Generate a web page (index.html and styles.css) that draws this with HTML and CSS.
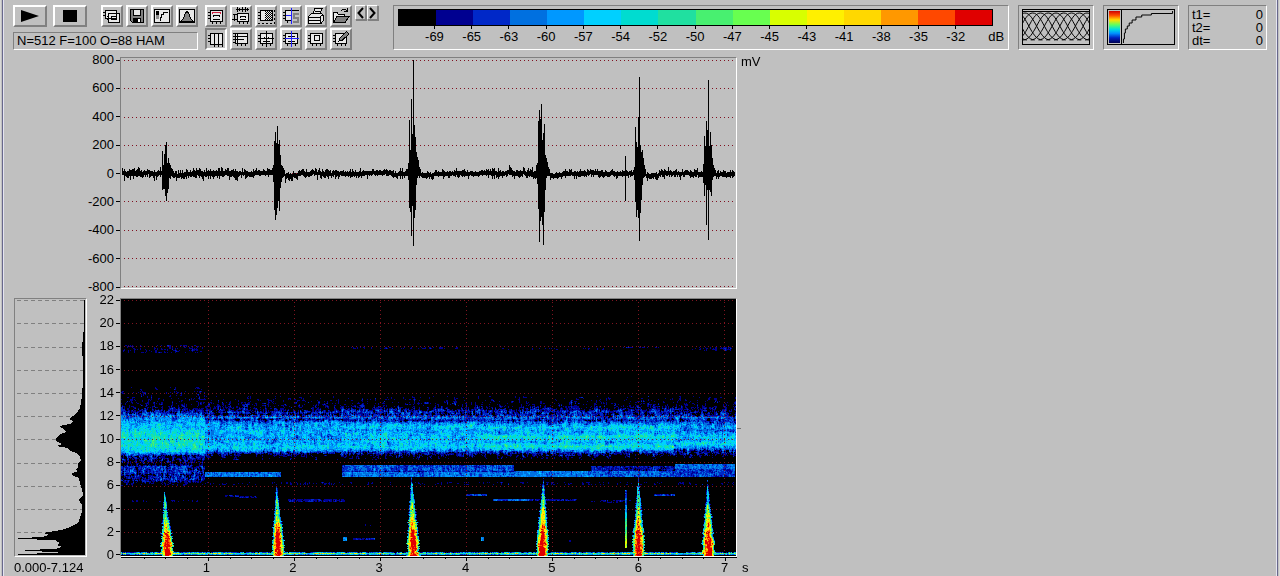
FILE: index.html
```
<!DOCTYPE html>
<html lang="en">
<head>
<meta charset="utf-8">
<title>Spectrogram analyser</title>
<link rel="stylesheet" href="styles.css">
</head>
<body>
<div class="window">
<header class="toolbar">
  <div class="group transport">
    <div class="row">
      <button class="btn wide" aria-label="Play"><svg width="20" height="14" viewBox="0 0 20 14"><path d="M1 1L19 7L1 13Z"/></svg></button>
      <button class="btn wide" aria-label="Stop"><svg width="14" height="12" viewBox="0 0 14 12"><path d="M0 0H14V12H0Z"/></svg></button>
      <div class="row icons">
        <button class="btn" aria-label="Copy"><svg class="ico" viewBox="0 0 18 18"><path class="f" d="M2.500 3.500H13.500V11.500H2.500ZM5.500 6.500H16.500V15.500H5.500Z"/><path d="M0 5.500H3M0 8.500H3M4 12.500H6M4 9.500H6M8 12.500H14M8.500 11V9.500H13.500V11"/></svg></button>
        <button class="btn" aria-label="Save"><svg class="ico" viewBox="0 0 18 18"><path class="g" d="M2.500 2.500H15.500V15.500H4.500L2.500 13.500Z"/><path class="f" d="M5.500 2.500H12.500V8.500H5.500Z"/><path class="k" d="M5 11H13V16H5Z"/><path class="w" d="M10 12H12V15H10Z"/></svg></button>
        <button class="btn" aria-label="Transfer curve"><svg class="ico" viewBox="0 0 18 18"><path class="f" d="M1.500 2.500H16.500V15.500H1.500Z"/><path class="k" d="M3 4H6V8H3Z"/><path class="s" d="M3 8H6V12H3Z"/><path d="M7.500 14V10.500H8.500V7.500H10.500V5.500H15"/></svg></button>
        <button class="btn" aria-label="Spectrum"><svg class="ico" viewBox="0 0 18 18"><path class="f" d="M1.500 2.500H16.500V15.500H1.500Z"/><path class="g" d="M3 14.500Q6 12 7 7L9 4L11 7Q12 12 15 14.500Z"/></svg></button>
      </div>
    </div>
    <output class="status">N=512 F=100 O=88 HAM</output>
  </div>
  <div class="group tools">
    <div class="row">
      <button class="btn" aria-label="Spectrogram"><svg class="ico" viewBox="0 0 18 18"><path class="f" d="M3.500 3.500H15.500V14.500H3.500Z"/><path d="M1 5.500H3M1 8.500H3M1 11.500H3M5.500 15V17M9.500 15V17M13.500 15V17M6.500 10V8.500H12.500V10M6 12.500H13"/><path class="r" d="M5.500 7V5.500H13.500V7"/></svg></button>
      <button class="btn" aria-label="Waveform and spectrogram"><svg class="ico" viewBox="0 0 18 18"><path class="f" d="M5.500 6.500H16.500V14.500H5.500Z"/><path d="M4 2.500H17M5.500 0V5M7.500 1V4M10.500 0V5M13.500 0V5M15.500 1V4M1 7.500H5M2.500 7V14M0 12.500H5M7.500 15V17M11.500 15V17M15.500 15V17M8.500 11V9.500H13.500V11M8 12.500H14"/></svg></button>
      <button class="btn" aria-label="Select region"><svg class="ico" viewBox="0 0 18 18"><path class="f" d="M3.500 3.500H15.500V13.500H3.500Z"/><path class="dots" d="M8 4.500H15M9 5.500H15M8 6.500H15M9 7.500H15M8 8.500H15M9 9.500H15M8 10.500H15M9 11.500H15M8 12.500H15"/><path d="M1 5.500H3M1 8.500H3M1 11.500H3"/><path class="far" d="M1 16.500H17V2"/></svg></button>
      <button class="btn" aria-label="Scale"><svg class="ico" viewBox="0 0 18 18"><path class="f" d="M10 3.500H3.500V13.500H10"/><path d="M1 5.500H3M1 8.500H8M1 11.500H3M10 3.500H17M5.500 13V16"/><path class="b" d="M9.500 1V17M4 8.500H9"/><path class="sg" d="M17 7H12V10.500H16V15H11"/></svg></button>
      <button class="btn" aria-label="Print"><svg class="ico" viewBox="0 0 18 18"><path class="f" d="M6 7L8 1.500H15L12.500 7M1.500 9.500L4.500 6.500H14.500L16.500 9V13.500L14 16.500H1.500Z"/><path d="M8 4H13M7 6H12M2 10H13L16 7M13.500 10V16M2 13H13"/></svg></button>
      <button class="btn" aria-label="Open"><svg class="ico" viewBox="0 0 18 18"><path class="f" d="M1.500 15V5.500H5L6.500 7.500H12.500V9.500"/><path class="g" d="M1.500 15.500L5 9.500H17L13 15.500Z"/><path d="M9 3.500Q12 1 15 4M15 1V4.500H12"/></svg></button>
      <button class="btn mini" aria-label="Previous"><svg width="7" height="12" viewBox="0 0 7 12"><path class="v" d="M6 1L1.500 6L6 11"/></svg></button>
      <button class="btn mini next" aria-label="Next"><svg width="7" height="12" viewBox="0 0 7 12"><path class="v" d="M1 1L5.500 6L1 11"/></svg></button>
    </div>
    <div class="row">
      <button class="btn down" aria-pressed="true" aria-label="Vertical cursors"><svg class="ico" viewBox="0 0 18 18"><path class="f" d="M3.500 3.500H15.500V14.500H3.500Z"/><path d="M1 5.500H3M1 8.500H3M1 11.500H3M7.500 3V17M11.500 3V17M15.500 14V17"/></svg></button>
      <button class="btn" aria-label="Horizontal cursors"><svg class="ico" viewBox="0 0 18 18"><path class="f" d="M3.500 3.500H15.500V13.500H3.500Z"/><path d="M1 3.500H4M1 6.500H15M1 9.500H12M1 12.500H4M5.500 3V16M9.500 13V16M13.500 13V16"/></svg></button>
      <button class="btn" aria-label="Cross cursor"><svg class="ico" viewBox="0 0 18 18"><path class="f" d="M3.500 3.500H15.500V13.500H3.500Z"/><path d="M1 5.500H3M1 8.500H17M1 11.500H3M9.500 1V17M5.500 13V16M13.500 13V16M7.500 7V8M11.500 7V8M6 11.500H13"/></svg></button>
      <button class="btn" aria-label="Tracking cursor"><svg class="ico" viewBox="0 0 18 18"><path class="f" d="M3.500 3.500H15.500V13.500H3.500Z"/><path d="M1 5.500H3M1 8.500H3M1 11.500H3M5.500 13V16M13.500 13V16M6 6.500H13M6 11.500H13"/><path class="b" d="M9.500 1V17M3 8.500H17"/></svg></button>
      <button class="btn" aria-label="Box cursor"><svg class="ico" viewBox="0 0 18 18"><path class="f" d="M3.500 3.500H15.500V13.500H3.500ZM7.500 5.500H12.500V10.500H7.500Z"/><path d="M1 5.500H3M1 8.500H3M1 11.500H3M5.500 13V16M9.500 13V16M13.500 13V16"/></svg></button>
      <button class="btn" aria-label="Annotate"><svg class="ico" viewBox="0 0 18 18"><path class="f" d="M3.500 3.500H14.500V13.500H3.500Z"/><path d="M1 5.500H3M1 8.500H3M1 11.500H3M5.500 13V16M9.500 13V16M13.500 13V16"/><path class="g" d="M7 11L8 8L14.500 1.500L17 4L10 10.500Z"/></svg></button>
    </div>
  </div>
  <section class="panel scale" aria-label="Level scale">
    <div class="bar" id="bar"></div>
    <div class="marks" id="marks"></div>
  </section>
  <section class="panel preview" aria-label="Window overlap">
    <svg class="pic" id="overlap" viewBox="0 0 68 34" preserveAspectRatio="none"></svg>
  </section>
  <section class="panel preview" aria-label="Colour transfer">
    <div class="transfer">
      <div class="rainbow"></div>
      <svg class="curve" viewBox="0 0 54 34" preserveAspectRatio="none"><path d="M1.500 33V29H2.500V23H3.500V19H5.500V16H7.500V13H10.500V10H14.500V7H20.500V5H30.500V3.500H52.500V1"/></svg>
    </div>
  </section>
  <dl class="panel times">
    <div><dt>t1=</dt><dd>0</dd></div>
    <div><dt>t2=</dt><dd>0</dd></div>
    <div><dt>dt=</dt><dd>0</dd></div>
  </dl>
</header>

<main class="plots">
  <div class="axis amp"><span>800</span><span>600</span><span>400</span><span>200</span><span>0</span><span>-200</span><span>-400</span><span>-600</span><span>-800</span></div>
  <div class="panel plot wave"><canvas id="wave" width="615" height="230"></canvas></div>
  <div class="unit">mV</div>

  <div class="panel plot power">
    <svg viewBox="0 0 71 257" preserveAspectRatio="none">
      <path class="dash" d="M2 1.500H70M2 24.500H70M2 48.500H70M2 71.500H70M2 94.500H70M2 117.500H70M2 140.500H70M2 164.500H70M2 187.500H70M2 210.500H70M2 233.500H70"/>
      <path d="M70 1H69L69 26L68 41L66.500 47L66.500 53L68 59V82L67 96L66 104L65 109L62 114L54 120L58 122L55 125L44 127L49 130L51 133L45 135L41 139V142L47 145L41 147L53 149L55 152L61 154L65 158L66 161L63 165V168L61 171L63 172L56 175L58 177L64 179L65 184L67 190L68 196L64 201L67 206V213L65 219L63 224L55 228L46 231L28 234L35 236L28 237L30 238L3 239V240L40 241L45 244L42 246L47 248L40 250L10 251V252L44 253L41 254L3 255V256H70Z"/>
    </svg>
  </div>
  <div class="axis freq"><span>22</span><span>20</span><span>18</span><span>16</span><span>14</span><span>12</span><span>10</span><span>8</span><span>6</span><span>4</span><span>2</span><span>0</span></div>
  <div class="panel plot spectro"><canvas id="spectro" width="615" height="257"></canvas></div>
  <div class="cursor"></div>

  <div class="range">0.000-7.124</div>
  <div class="time">
    <svg id="ticks" viewBox="0 0 617 4" preserveAspectRatio="none"></svg>
    <div class="seconds"><span>1</span><span>2</span><span>3</span><span>4</span><span>5</span><span>6</span><span>7</span></div>
  </div>
  <div class="second">s</div>
</main>
</div>
<script src="app.js"></script>
</body>
</html>
```
FILE: styles.css
```
* { box-sizing: border-box; }
body { margin: 0; background: #c0c0c0; color: #000; font: 13px/14px "Liberation Sans", Arial, sans-serif; overflow: hidden; }
.window { min-height: 100vh; border-left: 1px solid #d8d8d8; border-right: 1px solid #d8d8d8; padding: 5px 12px 0 12px; background: linear-gradient(90deg, #c0c0c0 0 1px, #68688c 1px 2px, #e4e4f0 2px 3px, #c0c0c0 3px calc(100% - 3px), #e4e4f0 calc(100% - 3px) calc(100% - 2px), #68688c calc(100% - 2px) calc(100% - 1px), #c0c0c0 0); }
.toolbar { display: flex; align-items: stretch; min-height: 44px; }
.group { display: flex; flex-direction: column; justify-content: space-between; flex: none; }
.row { display: flex; align-items: flex-start; gap: 3px; }
.transport { width: 185px; gap: 4px; }
.transport > .row { gap: 6px; }
.icons { margin-left: auto; }
.transport .icons { gap: 3px; }
.tools { margin-left: 7px; gap: 1px; }
.btn { width: 22px; height: 22px; padding: 0; display: flex; align-items: center; justify-content: center; background: #c0c0c0; border: 2px solid; border-color: #fff #808080 #808080 #fff; border-radius: 0; }
.wide { width: 34px; }
.mini { width: 11px; height: 15px; border-width: 1px; box-shadow: 1px 1px #808080; }
.next { margin-left: -2px; }
.down { border-color: #808080 #fff #fff #808080; }
.ico { width: 18px; height: 18px; flex: none; fill: none; stroke: #000; shape-rendering: crispEdges; }
.f { fill: #e8e8e8; }
.g { fill: #808080; }
.k { fill: #000; stroke: none; }
.w { fill: #fff; stroke: none; }
.s { fill: #909090; stroke: none; }
.r { stroke: #d02040; }
.b { stroke: #2020ff; }
.sg { stroke: #808080; stroke-width: 2; }
.dots { stroke-dasharray: 1 1; }
.far { stroke-dasharray: 2 2; }
.v { fill: none; stroke: #000; stroke-width: 2; }
.panel { margin: 0; border: 1px solid; border-color: #808080 #fff #fff #808080; }
.status { display: block; height: 18px; padding-left: 3px; line-height: 16px; border: 1px solid; border-color: #808080 #fff #fff #808080; white-space: nowrap; }
.scale { flex: 1; min-width: 0; margin-left: 15px; padding: 3px 15px 0 4px; }
.bar { display: flex; height: 17px; border: 1px solid #000; }
.bar span { flex: 1; }
.marks { display: flex; padding-left: 3%; }
.marks span { flex: 1; display: flex; flex-direction: column; align-items: center; min-width: 0; line-height: 16px; }
.marks span::before { content: ""; width: 1px; height: 3px; background: #000; }
.marks .db { flex: .5; align-items: flex-start; margin-right: -14px; padding-left: 14px; }
.marks .db::before { visibility: hidden; }
.preview { flex: none; width: 76px; margin-left: 9px; padding: 3px; }
.pic { display: block; width: 100%; height: 36px; border: 1px solid #000; fill: none; stroke: #000; shape-rendering: crispEdges; }
.transfer { display: flex; height: 36px; border: 1px solid #000; }
.rainbow { width: 11px; margin: 1px; background: linear-gradient(#d00000, #ff5000 14%, #ffe000 28%, #60ff60 43%, #00e0e0 57%, #0090ff 70%, #0020c0 84%, #000050); }
.curve { flex: 1; min-width: 0; height: 34px; border-left: 1px solid #000; fill: none; stroke: #000; shape-rendering: crispEdges; }
.times { flex: none; width: 79px; margin-left: 9px; padding: 2px 3px; }
.times div { display: flex; justify-content: space-between; line-height: 13px; }
.times dd { margin: 0; }
.plots { display: grid; grid-template-columns: 73px 33px minmax(0, 617fr) minmax(0, 530fr); margin: 7px 0 0 1px; }
.plot { display: flex; }
.plot canvas { display: block; width: 100%; image-rendering: pixelated; }
.plot svg { width: 100%; height: 100%; shape-rendering: crispEdges; }
.wave { grid-column: 3; margin-bottom: 9px; }
.wave canvas { height: 230px; }
.spectro canvas { height: 257px; }
.power { grid-column: 1; }
.power svg { height: 257px; }
.dash { stroke: #808080; stroke-dasharray: 4 3; }
.axis { grid-column: 2; display: flex; flex-direction: column; justify-content: space-between; text-align: right; }
.axis span { display: flex; justify-content: flex-end; align-items: center; gap: 2px; height: 14px; }
.axis span::after { content: ""; width: 4px; height: 1px; background: #000; }
.amp { margin: -4px 0 4px; }
.freq { margin: -5px 0; }
.unit { padding: 0 4px; margin-top: -2px; }
.cursor { width: 4px; height: 1px; margin-top: 130px; background: #707070; }
.range { grid-column: 1; padding-top: 4px; white-space: nowrap; }
.time { grid-column: 3; overflow: visible; }
.time svg { display: block; width: 100%; height: 4px; stroke: #000; shape-rendering: crispEdges; }
.seconds { display: flex; width: 105%; padding-left: 7%; }
.seconds span { flex: 1; text-align: center; }
.second { padding: 4px 5px 0; }
```
FILE: app.js
```
const palette = ['#000000', '#000090', '#0028c8', '#0070e0', '#0098ff', '#00d0ff', '#00dcd0', '#20e0a0',
  '#48f070', '#68ff50', '#d8ff00', '#fff000', '#ffd800', '#ff9800', '#ff4800', '#e00000'];
const levels = [-69, -65, -63, -60, -57, -54, -52, -50, -47, -45, -43, -41, -38, -35, -32];

palette.forEach(c => {
  const cell = document.createElement('span');
  cell.style.background = c;
  document.getElementById('bar').append(cell);
});
[...levels, 'dB'].forEach(v => {
  const mark = document.createElement('span');
  mark.textContent = v;
  if (v === 'dB') mark.className = 'db';
  document.getElementById('marks').append(mark);
});

let seed = 12345;
function rnd() {
  seed = (seed * 1664525 + 1013904223) % 4294967296;
  return seed / 4294967296;
}
const gauss = () => rnd() + rnd() + rnd() - 1.5;

// Overlapping analysis windows
let arcs = 'M0 1.500H68';
for (let x = -56; x < 68; x += 8) arcs += `M${x} 30C${x + 12} 30 ${x + 16} 3 ${x + 26} 3S${x + 40} 30 ${x + 52} 30`;
document.getElementById('overlap').innerHTML = `<path d="${arcs}"/>`;

// Time ticks: one per quarter second
let ticks = 'M1 0.500H617';
for (let q = 1; q < 29; q++) {
  const x = Math.round(2 + q * 21.52) + 0.5;
  ticks += `M${x} 0V${q % 4 ? 2 : 4}`;
}
document.getElementById('ticks').innerHTML = `<path d="${ticks}"/>`;

// Waveform. Bars are [x, top, bottom] for each pulse.
const pulses = [
  [41,93,132],[42,107,131],[43,96,131],[44,87,138],[45,84,143],[46,105,135],[47,100,131],[48,105,120],[49,107,119],[50,110,118],[51,111,118],
  [152,107,124],[153,83,152],[154,74,162],[155,85,157],[156,68,150],[157,86,143],[158,82,153],[159,97,130],[160,107,124],[161,108,120],[162,110,118],[163,112,118],
  [287,105,122],[288,62,150],[289,92,154],[290,41,178],[291,76,148],[292,2,188],[293,67,160],[294,79,152],[295,94,127],[296,99,120],[297,102,118],[298,109,118],[299,111,118],
  [415,107,120],[416,105,126],[417,63,151],[418,52,184],[419,61,163],[420,46,159],[421,82,167],[422,75,187],[423,66,154],[424,97,132],[425,100,120],[426,104,118],[427,109,118],[428,112,118],
  [504,98,143],[513,109,122],[514,69,144],[515,84,159],[516,89,152],[517,59,160],[518,19,183],[519,87,155],[520,94,142],[521,92,127],[522,100,120],[523,107,119],[524,111,118],
  [582,106,125],[583,78,138],[584,88,127],[585,63,167],[586,72,132],[587,22,182],[588,88,132],[589,74,134],[590,87,138],[591,100,122],[592,107,119],[593,110,118],[594,112,118]
];
const wave = document.getElementById('wave').getContext('2d');
wave.fillStyle = '#801020';
for (let k = 0; k < 9; k++) {
  for (let x = 3; x < 614; x += 4) wave.fillRect(x, Math.round(2 + k * 28.25), 1, 1);
}
wave.fillStyle = '#000';
const loud = x => x < 120 ? 3.4 : x < 220 ? 2.8 : x > 368 && x < 415 ? 3.4 : 2.2;
let drift = 0;
for (let x = 1; x < 614; x++) {
  let mid = 115;
  for (const e of [51, 163, 299, 428, 524, 594]) if (x > e && x < e + 14) mid = 117;
  drift = drift * 0.7 + gauss() * 0.7;
  const a = loud(x);
  const up = 1.3 + rnd() * rnd() * a * 1.8;
  const dn = 1.3 + rnd() * rnd() * a * 1.8;
  wave.fillRect(x, Math.round(mid + drift - up), 1, Math.round(up + dn + 1));
}
for (const x of [279, 281, 371, 373, 377]) wave.fillRect(x, 110, 1, 11);
for (const [x, t, b] of pulses) wave.fillRect(x, t, 1, b - t);

// Spectrogram. Profiles are [y, level] knots, interpolated down the column.
const profiles = [
  [84, [[88,-1],[98,-.4],[106,.1],[112,1.2],[117,3],[122,4.2],[130,5],[134,6],[148,6],[152,5.2],[154,3.4],[157,.8],[162,.2],[165,-.3],[167,1.6],[171,1.6],[173,2],[175,1],[179,1.6],[183,.4],[187,-1]]],
  [221, [[97,-1],[104,-.3],[110,.3],[113,1.4],[115,.6],[118,3],[120,1.2],[123,3.4],[128,4.4],[138,3.8],[144,4.4],[148,5.2],[151,4],[153,2],[155,.2],[160,-1]]],
  [360, [[97,-1],[106,-.1],[109,.3],[112,1.7],[115,1.2],[118,3],[121,1.5],[123,3.2],[127,4.9],[131,3.8],[135,4.8],[143,4.6],[148,5.1],[151,3.6],[153,1.5],[156,.2],[160,-1]]],
  [553, [[97,-1],[106,-.1],[110,.8],[112,1.6],[115,1.2],[118,2.8],[121,1.7],[124,3.4],[128,5.2],[132,4],[135,4.6],[137,6.2],[140,5.2],[143,4.2],[147,6.2],[150,4.5],[153,1.8],[155,.5],[160,-1]]],
  [615, [[97,-1],[106,-.3],[112,.6],[116,1.2],[118,2.9],[121,1.8],[127,4],[131,3],[138,5],[141,4.2],[144,5.8],[148,3.7],[151,1.3],[154,1],[158,-1]]]
];
// Horizontal features: x0, x1, y0, y1, level
const lines = [
  [2,84,46,54,0],[84,614,183,186,-.2],[84,160,173,178,3.1],[221,393,166,172,2.4],[221,470,172,173,1.8],[221,470,173,178,3.1],
  [393,470,172,178,3.2],[470,554,167,172,1.2],[470,554,172,178,2.7],[554,614,165,170,3.1],[554,614,170,178,2],
  [230,340,48,50,.1],[380,500,49,51,-.2],[500,540,48,49,.1],[570,612,48,52,.2],[66,84,157,161,1.4],
  [8,78,201,203,.2],[104,118,196,198,1.5],[118,136,197,199,.8],[167,224,200,203,.9],[345,366,195,197,1.7],
  [372,412,200,202,2.6],[412,456,200,202,1],[470,510,201,203,.5],[486,497,201,204,1.1],[533,554,195,197,2],
  [222,226,238,242,3.2],[232,254,239,241,1.3],[244,252,225,228,.3],[360,363,238,242,3.4],[448,450,241,243,1]
];
// Pulse cones: x, top, lean towards the base
const cones = [[43,193,3],[155,185,2],[290,176,2],[422,175,-1],[517,176,0],[586,181,1]];
const ragged = Array.from({ length: 257 }, () => gauss() * 0.8);

function profileLevel(x, y) {
  const knots = (profiles.find(p => x < p[0]) ?? profiles[4])[1];
  for (let i = 1; i < knots.length; i++) {
    const [y0, v0] = knots[i - 1], [y1, v1] = knots[i];
    if (y >= y0 && y <= y1) return v0 + (v1 - v0) * (y - y0) / (y1 - y0);
  }
  return -3;
}

const W = 615, H = 257;
const grid = document.getElementById('spectro').getContext('2d');
const image = grid.createImageData(W, H);
const rgb = palette.map(c => [1, 3, 5].map(i => parseInt(c.slice(i, i + 2), 16)));
const left = new Float32Array(H);
for (let x = 0; x < W; x++) {
  let n = 0;
  for (let y = 0; y < H; y++) {
    n = n * 0.55 + gauss() * 1.5;
    left[y] = left[y] * 0.35 + n * 0.95;
    n = n * 0.85 + left[y] * 0.15;
    const m = left[y];
    let v = profileLevel(x, y) + m;
    for (const [x0, x1, y0, y1, l] of lines) {
      if (x >= x0 && x < x1 && y >= y0 && y < y1) v = Math.max(v, l + m * 0.7);
    }
    for (const [cx, top, shift] of cones) {
      if (Math.abs(x - cx) > 12 || y < top) continue;
      const t = (y - top) / (254 - top);
      const w = 1 + 3.6 * Math.min(1, t * 1.2) + ragged[(y + cx) % 257] * Math.min(1, t * 2);
      const d = Math.abs(x - cx - shift * t) / w;
      const peak = 1.5 + 17.5 * Math.pow(t, 0.9);
      if (d < 1.3) v = Math.max(v, Math.min(16.5, peak) - d * d * 7.5 + m * 1.6);
    }
    if ((x === 504 || x === 505) && y > 190 && y < 249) v = Math.max(v, 1 + (y - 190) * 0.17 + m);
    if (y === 253) v = Math.max(v, 2.6 + m * 1.8);
    if (y === 254) v = Math.max(v, 8 + m * 2.3);
    if (y === 255) v = Math.max(v, 4 + m);
    const c = rgb[Math.max(0, Math.min(15, Math.round(v)))];
    const i = (y * W + x) * 4;
    image.data[i] = c[0];
    image.data[i + 1] = c[1];
    image.data[i + 2] = c[2];
    image.data[i + 3] = 255;
  }
}
grid.putImageData(image, 0, 0);
grid.fillStyle = '#801420';
for (let k = 0; k < 11; k++) {
  for (let x = 3; x < W; x += 4) grid.fillRect(x, Math.round(1 + k * 23.2), 1, 1);
}
for (let s = 1; s < 8; s++) {
  for (let y = 3; y < H; y += 4) grid.fillRect(Math.round(1 + s * 86.07), y, 1, 1);
}
```
